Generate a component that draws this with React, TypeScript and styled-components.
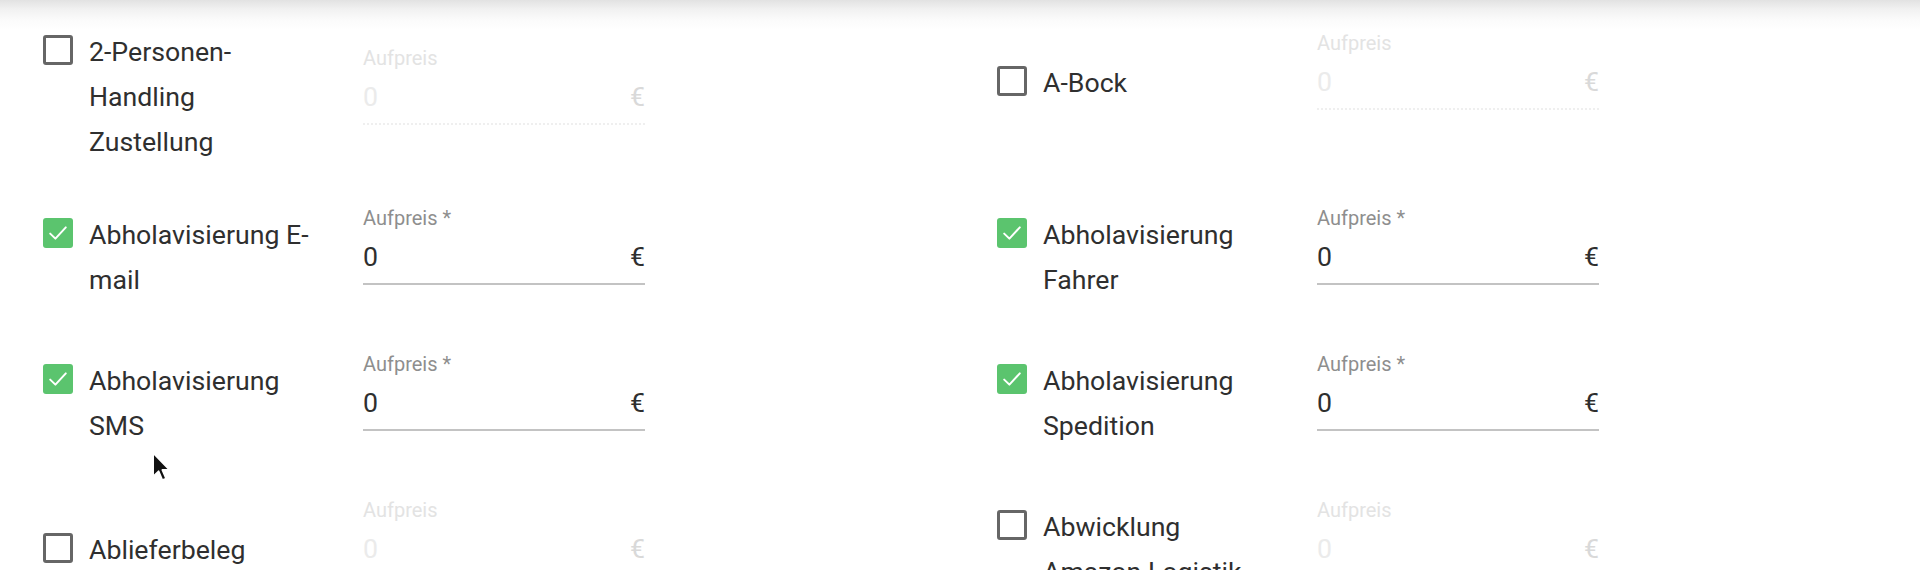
import React from "react";
import styled, { createGlobalStyle } from "styled-components";

const GlobalStyle = createGlobalStyle`
  html, body {
    margin: 0;
    padding: 0;
    background: #ffffff;
  }
  body {
    font-family: Roboto, "Noto Sans", "Liberation Sans", sans-serif;
    color: #2f2f2f;
    overflow: hidden;
  }
`;

const Page = styled.div`
  position: relative;
  width: 1920px;
  height: 570px;
  overflow: hidden;
  background: #ffffff;
`;

/* soft shadow cast by the header that sits just above this panel */
const TopShade = styled.div`
  height: 30px;
  background: linear-gradient(
    to bottom,
    #e2e2e2 0px,
    #f1f1f1 9px,
    #fbfbfb 20px,
    #ffffff 30px
  );
`;

const OptionGrid = styled.div`
  display: grid;
  grid-template-columns: 954px 954px;
  row-gap: 40px;
  align-items: start;
  padding-left: 43px;
`;

const OptionItem = styled.div`
  display: flex;
  align-items: center;
`;

const CheckLabel = styled.label`
  flex: none;
  width: 320px;
  min-height: 70px;
  display: flex;
  align-items: center;
  cursor: pointer;
`;

const CheckLine = styled.span`
  display: flex;
  align-items: flex-start;
`;

const Box = styled.span<{ $checked: boolean }>`
  flex: none;
  box-sizing: border-box;
  width: 30px;
  height: 30px;
  margin-top: 5px;
  margin-right: 16px;
  border-radius: 3px;
  display: flex;
  align-items: center;
  justify-content: center;
  border: ${(p) => (p.$checked ? "none" : "3px solid #666666")};
  background: ${(p) => (p.$checked ? "#5bc46e" : "#ffffff")};
`;

const LabelText = styled.span`
  max-width: 225px;
  font-size: 26.7px;
  line-height: 45px;
  color: #2f2f2f;
`;

const PriceField = styled.div`
  flex: none;
  width: 282px;
  margin-bottom: 26px;
`;

const FieldLabel = styled.div<{ $disabled: boolean }>`
  height: 26px;
  font-size: 20px;
  line-height: 26px;
  color: ${(p) => (p.$disabled ? "#e3e3e3" : "#8e8e8e")};
`;

const InputRow = styled.div<{ $disabled: boolean }>`
  display: flex;
  justify-content: space-between;
  align-items: baseline;
  padding: 7px 0 6px;
  font-size: 26.7px;
  line-height: 39px;
  border-bottom: 2px ${(p) => (p.$disabled ? "dotted #efefef" : "solid #c3c3c3")};
`;

const Value = styled.span<{ $disabled: boolean }>`
  color: ${(p) => (p.$disabled ? "#ebebeb" : "#2f2f2f")};
`;

const Currency = styled.span<{ $disabled: boolean }>`
  color: ${(p) => (p.$disabled ? "#d9d9d9" : "#2f2f2f")};
`;

const Pointer = styled.svg`
  position: absolute;
  left: 151px;
  top: 451px;
  width: 22px;
  height: 34px;
`;

type Option = { label: string; checked: boolean };

const options: Option[] = [
  { label: "2-Personen-Handling Zustellung", checked: false },
  { label: "A-Bock", checked: false },
  { label: "Abholavisierung E-mail", checked: true },
  { label: "Abholavisierung Fahrer", checked: true },
  { label: "Abholavisierung SMS", checked: true },
  { label: "Abholavisierung Spedition", checked: true },
  { label: "Ablieferbeleg", checked: false },
  { label: "Abwicklung Amazon Logistik", checked: false },
];

function CheckMark() {
  return (
    <svg width="24" height="24" viewBox="0 0 24 24">
      <path
        d="M4.2 12.6 L9.4 17.6 L19.8 6.4"
        fill="none"
        stroke="#ffffff"
        strokeWidth="2"
        strokeLinecap="round"
        strokeLinejoin="round"
      />
    </svg>
  );
}

function OptionRow({ label, checked }: Option) {
  const disabled = !checked;
  return (
    <OptionItem>
      <CheckLabel>
        <CheckLine>
          <Box $checked={checked}>{checked && <CheckMark />}</Box>
          <LabelText>{label}</LabelText>
        </CheckLine>
      </CheckLabel>
      <PriceField>
        <FieldLabel $disabled={disabled}>
          {disabled ? "Aufpreis" : "Aufpreis *"}
        </FieldLabel>
        <InputRow $disabled={disabled}>
          <Value $disabled={disabled}>0</Value>
          <Currency $disabled={disabled}>€</Currency>
        </InputRow>
      </PriceField>
    </OptionItem>
  );
}

export default function App() {
  return (
    <Page>
      <GlobalStyle />
      <TopShade />
      <OptionGrid>
        {options.map((o) => (
          <OptionRow key={o.label} {...o} />
        ))}
      </OptionGrid>
      <Pointer viewBox="0 0 20 31">
        <path
          d="M2 2 L2 23 L7 18.4 L10.4 26.5 L13.6 25.1 L10.2 17.2 L16.8 17.2 Z"
          fill="#111111"
          stroke="#ffffff"
          strokeWidth="1.4"
          strokeLinejoin="round"
        />
      </Pointer>
    </Page>
  );
}
